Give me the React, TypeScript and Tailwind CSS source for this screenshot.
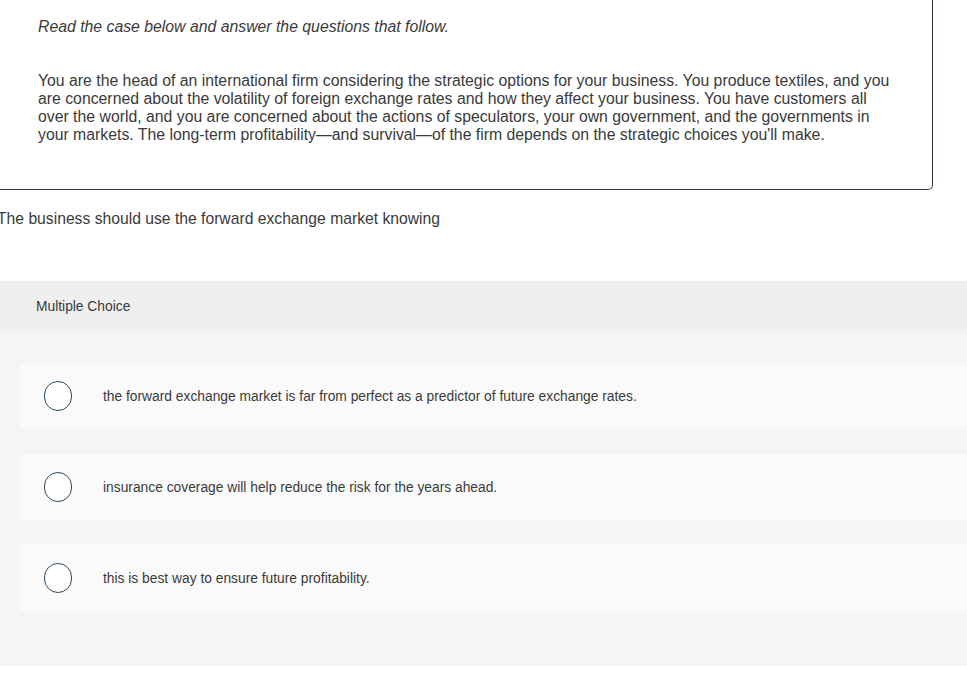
const options = [
  'the forward exchange market is far from perfect as a predictor of future exchange rates.',
  'insurance coverage will help reduce the risk for the years ahead.',
  'this is best way to ensure future profitability.',
];

function Radio() {
  return <span className="block w-[28px] h-[30px] rounded-full border-[1.5px] border-[#2f4a5c] bg-white shrink-0" />;
}

export default function App() {
  return (
    <div className="w-[967px] h-[683px] overflow-hidden bg-white text-[#3a3a3a] font-['Liberation_Sans',Arial,sans-serif]">
      <div className="w-[933px] h-[190px] border-r border-b border-[#2c3e50] rounded-br-[5px] pl-[38px] pr-[38px] pt-[17px]">
        <p className="italic text-[15.8px] leading-[20px]">Read the case below and answer the questions that follow.</p>
        <p className="mt-[35px] text-[15.8px] leading-[18px]">
          You are the head of an international firm considering the strategic options for your business. You produce textiles, and you are concerned about the volatility of foreign exchange rates and how they affect your business. You have customers all over the world, and you are concerned about the actions of speculators, your own government, and the governments in your markets. The long-term profitability—and survival—of the firm depends on the strategic choices you'll make.
        </p>
      </div>
      <p className="-ml-[3px] mt-[19px] text-[15.7px] leading-[20px]">The business should use the forward exchange market knowing</p>
      <div className="mt-[52px] h-[50px] bg-[#efefef] flex items-center pl-[36px] pt-[3px] text-[13.8px]">Multiple Choice</div>
      <div className="bg-[#f5f5f5] pl-[20px] pt-[32px] pb-[55px] flex flex-col gap-[25px]">
        {options.map((o) => (
          <div key={o} className="h-[66px] bg-[#fafafa] flex items-center pl-[24px]">
            <Radio />
            <span className="ml-[31px] pt-[3px] text-[13.8px]">{o}</span>
          </div>
        ))}
      </div>
    </div>
  );
}
